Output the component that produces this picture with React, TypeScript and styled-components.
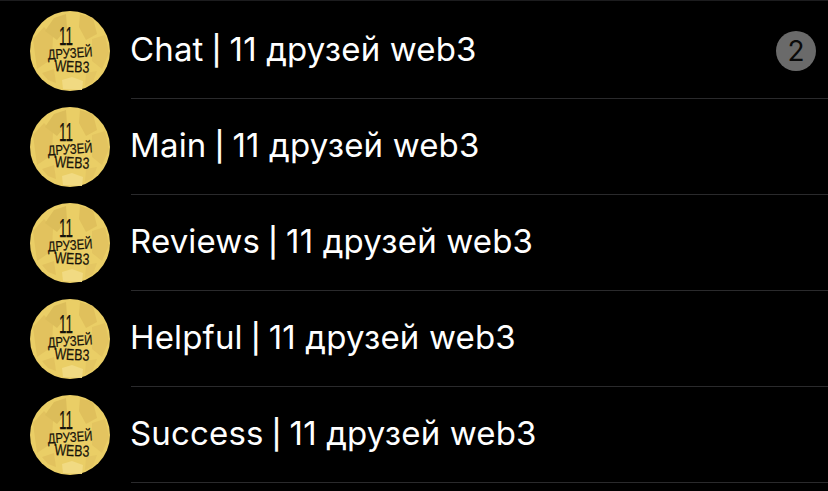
import React from "react";
import styled, { createGlobalStyle } from "styled-components";

const GlobalStyle = createGlobalStyle`
  html, body {
    margin: 0;
    background: #000;
  }
  body {
    font-family: Inter, "Noto Sans", "Liberation Sans", sans-serif;
    overflow: hidden;
  }
`;

const channels = [
  { name: "Chat", unread: 2 },
  { name: "Main" },
  { name: "Reviews" },
  { name: "Helpful" },
  { name: "Success" },
];

function GroupLogo() {
  return (
    <LogoSvg viewBox="0 0 80 80">
      <circle cx="40" cy="40" r="40" fill="#eace66" />
      {/* faded film-poster figures behind the lettering */}
      <path d="M3 28 L14 16 L23 25 L22 48 L7 58 Z" fill="#e2c25e" />
      <path d="M15 20 L24 7 L36 3 L37 17 L27 29 Z" fill="#dcbd5a" />
      <path d="M50 3 L63 7 L67 23 L56 29 L49 16 Z" fill="#e0c05c" />
      <path d="M62 28 L75 24 L79 42 L72 58 L62 50 Z" fill="#e3c460" />
      <path d="M32 69 L42 66 L53 70 L52 79 L33 78 Z" fill="#f1da82" />
      <path d="M12 62 L24 58 L26 72 L18 69 Z" fill="#e2c25e" />
      <path d="M56 62 L67 60 L63 71 L55 75 Z" fill="#e4c662" />
      <LogoText x="36" y="34" fontSize="26" textLength="14" lengthAdjust="spacingAndGlyphs">
        11
      </LogoText>
      <LogoText
        x="40"
        y="47"
        fontSize="14"
        textLength="45"
        lengthAdjust="spacingAndGlyphs"
        transform="rotate(-4 40 42)"
      >
        ДРУЗЕЙ
      </LogoText>
      <LogoText
        x="42"
        y="61"
        fontSize="16"
        textLength="35"
        lengthAdjust="spacingAndGlyphs"
        transform="rotate(3 42 55)"
      >
        WEB3
      </LogoText>
    </LogoSvg>
  );
}

export default function App() {
  return (
    <>
      <GlobalStyle />
      <List>
        {channels.map((channel) => (
          <Row key={channel.name}>
            <AvatarCell>
              <GroupLogo />
            </AvatarCell>
            <Content>
              <Title>
                {channel.name} <Pipe>|</Pipe> 11 друзей web3
              </Title>
              {channel.unread && <Badge>{channel.unread}</Badge>}
            </Content>
          </Row>
        ))}
      </List>
    </>
  );
}

const List = styled.div`
  width: 828px;
  height: 491px;
  box-sizing: border-box;
  padding-top: 2px;
  border-top: 1px solid #1c1c1e;
  background: #000;
  display: flex;
  flex-direction: column;
`;

const Row = styled.div`
  height: 96px;
  flex-shrink: 0;
  display: flex;
`;

const AvatarCell = styled.div`
  width: 131px;
  flex-shrink: 0;
  padding: 8px 0 0 30px;
  box-sizing: border-box;
`;

const LogoSvg = styled.svg`
  display: block;
  width: 80px;
  height: 80px;
`;

const LogoText = styled.text`
  font-family: "Liberation Sans", sans-serif;
  fill: #17130a;
  stroke: #17130a;
  stroke-width: 0.25;
  text-anchor: middle;
`;

const Content = styled.div`
  flex: 1;
  display: flex;
  align-items: center;
  justify-content: space-between;
  padding-right: 12px;
  border-bottom: 1px solid #2a2a2c;
`;

const Title = styled.span`
  color: #fff;
  font-size: 33px;
  font-weight: 400;
  letter-spacing: 0.15px;
  line-height: 40px;
  margin-left: -1px;
  position: relative;
  top: -1px;
`;

const Pipe = styled.span`
  font-size: 29px;
  font-weight: 500;
  margin: 0 -1.5px;
`;

const Badge = styled.span`
  width: 40px;
  height: 40px;
  border-radius: 50%;
  background: #6a6a6a;
  color: #0a0a0a;
  font-size: 28px;
  line-height: 40px;
  text-align: center;
`;
